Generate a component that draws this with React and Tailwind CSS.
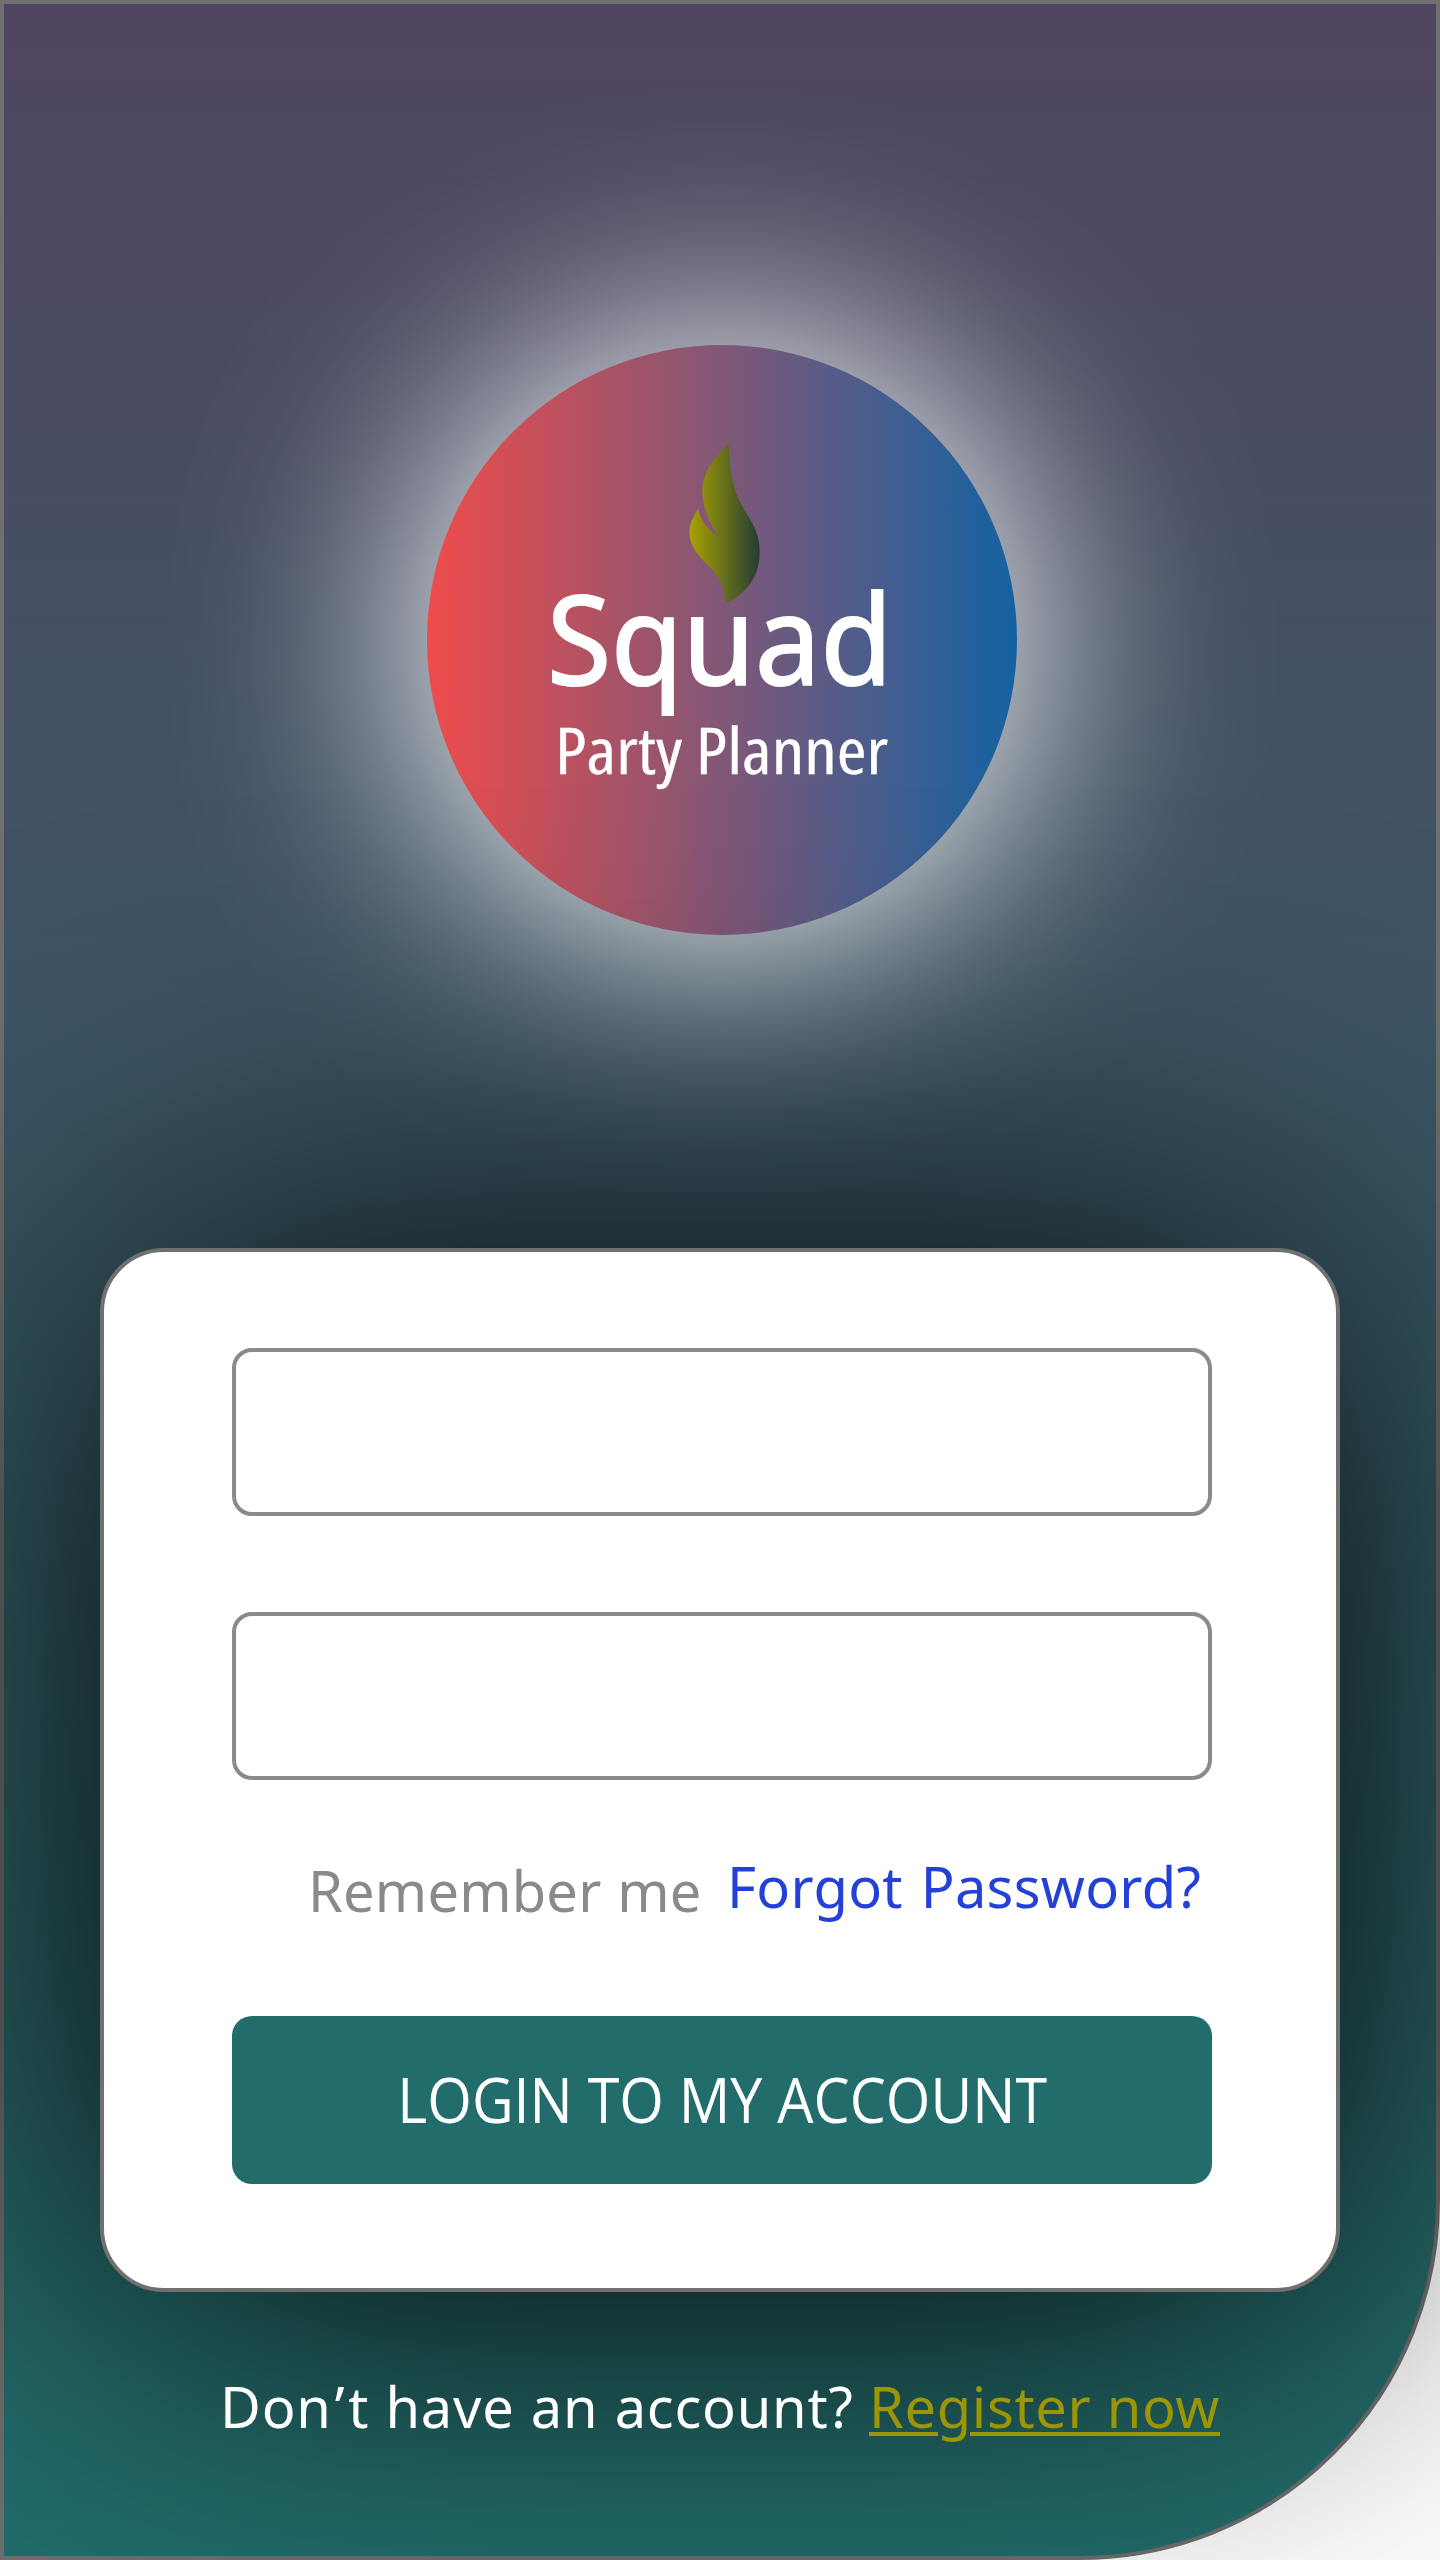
import React from "react";

function Flame() {
  return (
    <svg viewBox="0 0 390 570" className="ml-[233px] h-[190px] w-[130px]" aria-hidden="true">
      <defs>
        <linearGradient id="flame" gradientUnits="userSpaceOnUse" x1="88" y1="0" x2="300" y2="0">
          <stop offset="0" stopColor="#a8a202" />
          <stop offset="1" stopColor="#223c34" />
        </linearGradient>
      </defs>
      <path
        fill="url(#flame)"
        d="M202 45C163 80 127 130 127 185C128 235 150 285 178 322C150 305 125 280 114 238C98 262 87 285 88 312C92 350 112 374 140 402C175 435 194 465 196 521C250 495 297 450 299 372C301 290 255 255 235 205C215 155 208 115 206 45Z"
      />
    </svg>
  );
}

function Logo() {
  return (
    <div className="relative size-[590px]">
      <div className="absolute -inset-3 translate-y-1 rounded-full bg-white blur-[118px]" />
      <div className="relative flex size-full flex-col rounded-full bg-linear-to-r/srgb from-[#ee4c4b] to-[#1462a2] pt-[85px] text-white">
        <Flame />
        <div className="-mt-[68px] ml-[120px] h-[170px] w-fit origin-left scale-x-[0.941] whitespace-nowrap text-[124px] leading-[170px] [-webkit-text-stroke:2px_white]">
          Squad
        </div>
        <div className="-mt-[15px] ml-[128px] w-fit origin-left scale-x-[1.145] whitespace-nowrap font-['Open_Sans',sans-serif] text-[63px] leading-[86px] [font-stretch:75%] [-webkit-text-stroke:0.3px_white]">
          Party Planner
        </div>
      </div>
    </div>
  );
}

function LoginCard() {
  return (
    <div className="relative mt-[313px] h-[1044px] w-[1240px]">
      <div className="absolute inset-0 translate-y-3 rounded-[64px] bg-black blur-[198px]" />
      <form className="relative flex size-full flex-col rounded-[64px] border-4 border-[#707070] bg-white pt-24 pl-32">
        <input type="text" aria-label="Username" className="h-[168px] w-[980px] shrink-0 rounded-[20px] border-4 border-[#8a8a8a] bg-white" />
        <input type="password" aria-label="Password" className="mt-24 h-[168px] w-[980px] shrink-0 rounded-[20px] border-4 border-[#8a8a8a] bg-white" />
        <div className="mt-[68px] flex h-20 text-[56px] leading-[76px] whitespace-nowrap">
          <span className="mt-1 ml-[76px] w-[419px] tracking-[0.2px] text-[#8a8a8a] [word-spacing:1px]">Remember me</span>
          <a className="tracking-[0.3px] text-[#2340d8] [word-spacing:3px]">Forgot Password?</a>
        </div>
        <button
          type="button"
          className="mt-[88px] flex h-[168px] w-[980px] items-center justify-center rounded-[20px] bg-[#226c6c] pb-0.5 font-['Open_Sans',sans-serif] text-[62px] leading-[84px] whitespace-nowrap text-white"
        >
          <span className="scale-x-[0.925]">LOGIN TO MY ACCOUNT</span>
        </button>
      </form>
    </div>
  );
}

export default function App() {
  return (
    <div className="h-[2560px] w-[1440px] overflow-hidden bg-white font-['Noto_Sans',sans-serif]">
      <main className="flex h-full flex-col rounded-br-[360px] border-4 border-[#707070] bg-linear-to-b/srgb from-[#504560] to-[#226e6c] pt-[341px]">
        <div className="pl-[423px]">
          <Logo />
        </div>
        <div className="pl-24">
          <LoginCard />
        </div>
        <p className="relative mt-[76px] flex pl-[216px] text-[56px] leading-[76px] whitespace-nowrap text-white">
          <span className="w-[649px] tracking-[0.75px] [word-spacing:1px]">
            Don<span className="mx-[3px]">’</span>t have an account?
          </span>
          <a className="tracking-[0.67px] text-[#9b9507] underline decoration-4 underline-offset-4">Register now</a>
        </p>
      </main>
    </div>
  );
}
